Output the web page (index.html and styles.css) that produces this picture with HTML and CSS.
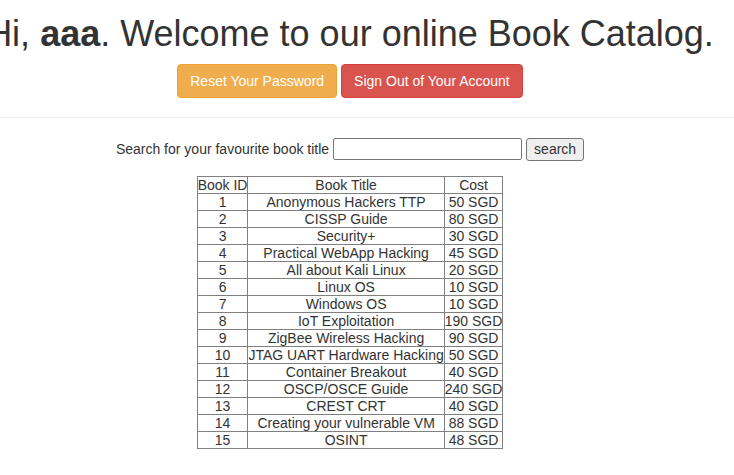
FILE: index.html
```html
<!DOCTYPE html>
<html lang="en">
<head>
<meta charset="utf-8">
<title>Book Catalog</title>
<link rel="stylesheet" href="styles.css">
</head>
<body>
<div class="top">
  <h1 class="greeting">Hi, <b>aaa</b>. Welcome to our online Book Catalog.</h1>
  <div class="actions">
    <a class="btn btn-warning" href="#">Reset Your Password</a>
    <a class="btn btn-danger" href="#">Sign Out of Your Account</a>
  </div>
</div>
<hr class="divider">
<div class="catalog">
  <form class="search">
    <label class="search-label" for="q">Search for your favourite book title</label>
    <input class="search-input" id="q" type="text">
    <button class="search-btn" type="button">search</button>
  </form>
  <table class="books">
    <tr><th>Book ID</th><th>Book Title</th><th>Cost</th></tr>
    <tr><td>1</td><td>Anonymous Hackers TTP</td><td>50 SGD</td></tr>
    <tr><td>2</td><td>CISSP Guide</td><td>80 SGD</td></tr>
    <tr><td>3</td><td>Security+</td><td>30 SGD</td></tr>
    <tr><td>4</td><td>Practical WebApp Hacking</td><td>45 SGD</td></tr>
    <tr><td>5</td><td>All about Kali Linux</td><td>20 SGD</td></tr>
    <tr><td>6</td><td>Linux OS</td><td>10 SGD</td></tr>
    <tr><td>7</td><td>Windows OS</td><td>10 SGD</td></tr>
    <tr><td>8</td><td>IoT Exploitation</td><td>190 SGD</td></tr>
    <tr><td>9</td><td>ZigBee Wireless Hacking</td><td>90 SGD</td></tr>
    <tr><td>10</td><td>JTAG UART Hardware Hacking</td><td>50 SGD</td></tr>
    <tr><td>11</td><td>Container Breakout</td><td>40 SGD</td></tr>
    <tr><td>12</td><td>OSCP/OSCE Guide</td><td>240 SGD</td></tr>
    <tr><td>13</td><td>CREST CRT</td><td>40 SGD</td></tr>
    <tr><td>14</td><td>Creating your vulnerable VM</td><td>88 SGD</td></tr>
    <tr><td>15</td><td>OSINT</td><td>48 SGD</td></tr>
  </table>
</div>
</body>
</html>
```
FILE: styles.css
```css
* { box-sizing: border-box; }
html, body { margin: 0; padding: 0; }
body {
  font-family: "Liberation Sans", Arial, sans-serif;
  font-size: 14px;
  line-height: 1.42857;
  color: #333;
  background: #fff;
  overflow-x: hidden;
}
.top {
  width: 700px;
  display: flex;
  flex-direction: column;
  align-items: center;
}
.greeting {
  margin: 14px 0 10px;
  font-size: 36px;
  font-weight: 500;
  line-height: 1.1;
  white-space: nowrap;
  color: #333;
}
.greeting b { font-weight: 700; }
.actions {
  display: flex;
  gap: 4px;
}
.btn {
  display: block;
  height: 34px;
  padding: 6px 12px;
  font-size: 14px;
  line-height: 20px;
  color: #fff;
  text-decoration: none;
  border: 1px solid transparent;
  border-radius: 4px;
  white-space: nowrap;
}
.btn-warning { background: #f0ad4e; border-color: #eea236; }
.btn-danger { background: #d9534f; border-color: #d43f3a; }
.divider {
  margin: 19px 0 20px;
  border: 0;
  border-top: 1px solid #eee;
  height: 0;
}
.catalog {
  width: 700px;
  display: flex;
  flex-direction: column;
  align-items: center;
}
.search {
  display: flex;
  align-items: center;
  height: 23px;
  margin: 0;
}
.search-label { line-height: 20px; margin-right: 4px; }
.search-input {
  width: 189px;
  height: 22px;
  margin: 0 4px 0 0;
  padding: 1px 2px;
  border: 1px solid #767676;
  border-radius: 2px;
  font: inherit;
  background: #fff;
}
.search-btn {
  height: 23px;
  width: 58px;
  padding: 1px 6px;
  margin: 0;
  font: inherit;
  line-height: 19px;
  color: #333;
  background: #efefef;
  border: 1px solid #767676;
  border-radius: 3px;
}
.books {
  margin-top: 15px;
  border-collapse: collapse;
  line-height: 16px;
  text-align: center;
}
.books th, .books td {
  padding: 0;
  border: 1px solid #808080;
  font-weight: 400;
  white-space: nowrap;
}
```
